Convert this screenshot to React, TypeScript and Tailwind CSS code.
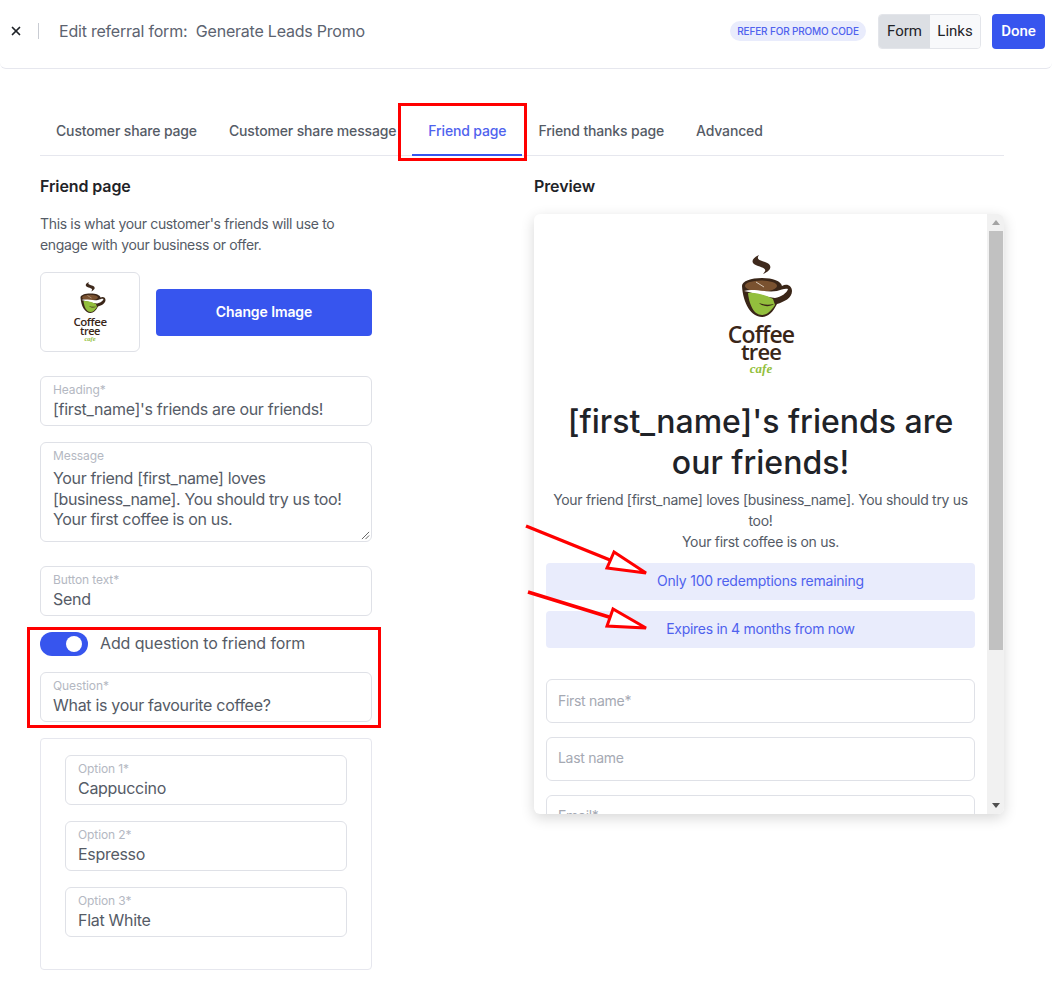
import { X } from 'lucide-react';

const tabs = ['Customer share page', 'Customer share message', 'Friend page', 'Friend thanks page', 'Advanced'];
const options = [
  { label: 'Option 1*', value: 'Cappuccino' },
  { label: 'Option 2*', value: 'Espresso' },
  { label: 'Option 3*', value: 'Flat White' },
];

const Logo = ({ className }: { className: string }) => (
  <svg viewBox="0 0 80 120" className={className + ' overflow-visible'}>
    <path d="M38 0C29 4 30 9 37 11C43 13 47 14 42 19C52 15 51 9 44 7C38 5 35 4 38 0Z" fill="#3f2a1d" />
    <path d="M21 31C21 26 30 23 41 23C52 23 60 26 61 31C66 28 71 31 71 36C71 43 63 47 56 49C52 57 47 62 41 62C30 62 22 48 21 31Z" fill="#3a2618" />
    <ellipse cx="40" cy="31" rx="16" ry="5.5" fill="#7a5230" />
    <path d="M35 27l8 5" stroke="#d9c9b8" strokeWidth="1" />
    <path d="M23 36C33 33 45 38 56 36C60 35 64 33 67 34C66 38 60 42 54 43C44 42 33 38 23 36Z" fill="#fff" />
    <path d="M27 38C36 37 46 41 52 44L54 50C50 56 46 60 41 60C32 60 28 48 27 38Z" fill="#93bf3d" />
    <path d="M38 48c5 2 10 2 15 1-4 3-11 3-15-1z" fill="#3a2618" />
    <text x="40" y="88" textAnchor="middle" fontFamily="'Open Sans', sans-serif" fontWeight="600" fontSize="23" letterSpacing="-0.9" fill="#3a2618">Coffee</text>
    <text x="40" y="105" textAnchor="middle" fontFamily="'Open Sans', sans-serif" fontWeight="600" fontSize="22" letterSpacing="-0.9" fill="#3a2618">tree</text>
    <text x="40" y="118" textAnchor="middle" fontFamily="'Liberation Serif', serif" fontStyle="italic" fontWeight="700" fontSize="13" fill="#93bf3d">cafe</text>
  </svg>
);

const Field = ({ label, value }: { label: string; value: string }) => (
  <div className="h-[50px] rounded-md border border-[#dfe1e7] bg-white px-3 pt-[5px]">
    <div className="text-[12px] leading-[16px] tracking-[-0.1px] text-[#b4b8c2]">{label}</div>
    <div className="mt-px text-[16px] leading-[21px] tracking-[-0.3px] text-[#555b66]">{value}</div>
  </div>
);

const Arrow = ({ className, d, head }: { className: string; d: string; head: string }) => (
  <svg viewBox="0 0 125 60" className={className}>
    <path d={d} stroke="#ff0000" strokeWidth="3.5" fill="none" />
    <path d={head} stroke="#ff0000" strokeWidth="3" fill="#fff" />
  </svg>
);

export default function App() {
  return (
    <div className="relative min-h-[987px] w-[1052px] overflow-hidden bg-white font-['Inter',sans-serif]">
      <header className="flex h-[69px] items-center rounded-b-md border-b border-[#e6e7ee] pb-[6px] pl-[9px] pr-[7px]">
        <X className="h-[14px] w-[14px] text-[#1f2328]" strokeWidth={3} />
        <div className="ml-[15px] h-4 w-px bg-[#c9ccd3]" />
        <div className="ml-5 text-[16px] tracking-[-0.22px] text-[#5c6370]">Edit referral form:&nbsp; Generate Leads Promo</div>
        <div className="ml-auto flex h-5 w-[136px] items-center justify-center rounded-full bg-[#e9ecfc] text-[10px] font-medium tracking-[-0.15px] text-[#4f62ee]">
          REFER FOR PROMO CODE
        </div>
        <div className="ml-3 flex h-[35px] w-[103px] overflow-hidden rounded border border-[#e3e5ea] font-['Roboto',sans-serif] text-[15px] text-[#1f2328]">
          <div className="flex w-[51px] items-center justify-center bg-[#dcdfe4]">Form</div>
          <div className="flex flex-1 items-center justify-center bg-[#f8f9fb]">Links</div>
        </div>
        <button className="ml-[11px] h-[35px] w-[53px] rounded bg-[#3755ee] font-['Roboto',sans-serif] text-[15px] font-medium text-white">
          Done
        </button>
      </header>

      <main className="px-10">
        <nav className="mt-[38px] flex h-[49px] w-[964px] border-b border-[#e6e7ee]">
          {tabs.map((tab) => (
            <div
              key={tab}
              className={
                tab === 'Friend page'
                  ? 'flex h-[49px] items-center border-b-2 border-[#3755ee] px-4 text-[14px] font-medium tracking-[-0.15px] text-[#4f62ee]'
                  : 'flex h-[49px] items-center border-b-2 border-transparent px-4 text-[14px] font-medium tracking-[-0.15px] text-[#555b66]'
              }
            >
              {tab}
            </div>
          ))}
        </nav>

        <div className="flex items-start">
          <section className="w-[332px]">
            <h2 className="mt-[20px] text-[16px] font-semibold leading-[21px] tracking-[-0.1px] text-[#1f2328]">Friend page</h2>
            <p className="mt-4 w-[310px] text-[14px] leading-[21px] tracking-[-0.34px] text-[#555b66]">
              This is what your customer's friends will use to engage with your business or offer.
            </p>
            <div className="mt-[17px] flex items-center gap-4">
              <div className="flex h-20 w-[100px] items-center justify-center rounded-md border border-[#dfe1e7]">
                <Logo className="h-[60px] w-10" />
              </div>
              <button className="h-[47px] w-[216px] rounded bg-[#3755ee] pb-px text-[14px] font-semibold tracking-[-0.1px] text-white">
                Change Image
              </button>
            </div>
            <div className="mt-6">
              <Field label="Heading*" value="[first_name]'s friends are our friends!" />
            </div>
            <div className="relative mt-4 h-[100px] rounded-md border border-[#dfe1e7] px-3 pt-[5px]">
              <div className="text-[12px] leading-[16px] tracking-[-0.1px] text-[#b4b8c2]">Message</div>
              <div className="mt-1 text-[16px] leading-[20.5px] tracking-[-0.35px] text-[#555b66]">
                Your friend [first_name] loves
                <br />
                [business_name]. You should try us too!
                <br />
                Your first coffee is on us.
              </div>
              <svg viewBox="0 0 10 10" className="absolute bottom-px right-px h-[9px] w-[9px]">
                <path d="M1 9 9 1M5 9l4-4" stroke="#555" strokeWidth="1" />
              </svg>
            </div>
            <div className="mt-6">
              <Field label="Button text*" value="Send" />
            </div>
            <div className="mt-4 flex items-center gap-3">
              <div className="flex h-6 w-12 items-center justify-end rounded-full bg-[#3755ee] pr-[6px]">
                <div className="h-4 w-4 rounded-full bg-white" />
              </div>
              <span className="pb-[2px] text-[16px] leading-[22px] tracking-[-0.12px] text-[#555b66]">Add question to friend form</span>
            </div>
            <div className="mt-4">
              <Field label="Question*" value="What is your favourite coffee?" />
            </div>
            <div className="mt-4 flex h-[232px] flex-col gap-4 rounded border border-[#e6e7ee] px-6 pt-4">
              {options.map((option) => (
                <Field key={option.label} label={option.label} value={option.value} />
              ))}
            </div>
          </section>

          <section className="ml-[162px] w-[470px]">
            <h2 className="mt-[20px] text-[16px] font-semibold leading-[21px] tracking-[-0.1px] text-[#1f2328]">Preview</h2>
            <div className="mt-[17px] flex h-[600px] overflow-hidden rounded-md bg-white shadow-[0_4px_14px_rgba(0,0,0,0.16)]">
              <div className="min-w-0 flex-1 px-3 text-center">
                <Logo className="mx-auto mt-[41px] h-[120px] w-20" />
                <h1 className="mt-[26px] text-[32px] font-medium leading-[41px] text-[#1f2328]">
                  [first_name]'s friends are our friends!
                </h1>
                <p className="mt-[6px] text-[14px] leading-[21px] tracking-[-0.3px] text-[#555b66]">
                  Your friend [first_name] loves [business_name]. You should try us too!
                  <br />
                  Your first coffee is on us.
                </p>
                <div className="mt-[11px] flex h-[37px] items-center justify-center rounded bg-[#e9ecfc] pb-[2px] text-[14px] tracking-[-0.22px] text-[#4f62ee]">
                  Only 100 redemptions remaining
                </div>
                <div className="mt-[11px] flex h-[37px] items-center justify-center rounded bg-[#e9ecfc] pb-[2px] text-[14px] tracking-[-0.3px] text-[#4f62ee]">
                  Expires in 4 months from now
                </div>
                <div className="mt-[31px] flex flex-col gap-[14px] text-left text-[14px] tracking-[-0.3px] text-[#a5a9b3]">
                  <div className="flex h-11 items-center rounded-md border border-[#dfe1e7] px-[11px] pb-[2px]">First name*</div>
                  <div className="flex h-11 items-center rounded-md border border-[#dfe1e7] px-[11px] pb-[3px]">Last name</div>
                  <div className="flex h-11 items-center rounded-md border border-[#dfe1e7] px-[11px] pb-[3px]">Email*</div>
                </div>
              </div>
              <div className="flex w-[17px] shrink-0 flex-col items-center bg-[#f1f1f1]">
                <svg viewBox="0 0 8 5" className="mt-[6px] h-[5px] w-2">
                  <path d="M4 0 8 5H0z" fill="#a3a3a3" />
                </svg>
                <div className="mt-[6px] h-[419px] w-[14px] bg-[#c1c1c1]" />
                <svg viewBox="0 0 8 5" className="mb-[6px] mt-auto h-[5px] w-2">
                  <path d="M0 0h8L4 5z" fill="#505050" />
                </svg>
              </div>
            </div>
          </section>
        </div>
      </main>

      {/* annotations drawn on top of the screenshot */}
      <div className="absolute left-[398px] top-[103px] h-[58px] w-[129px] border-[3px] border-[#ff0000]" />
      <div className="absolute left-[27px] top-[627px] h-[101px] w-[354px] border-[3px] border-[#ff0000]" />
      <Arrow className="absolute left-[525px] top-[522px] h-[60px] w-[125px]" d="M1 4 85 38" head="M89 30 82 46 121 51Z" />
      <Arrow className="absolute left-[525px] top-[589px] h-[60px] w-[125px]" d="M3 3 84 28" head="M88 20 82 37 121 39Z" />
    </div>
  );
}
